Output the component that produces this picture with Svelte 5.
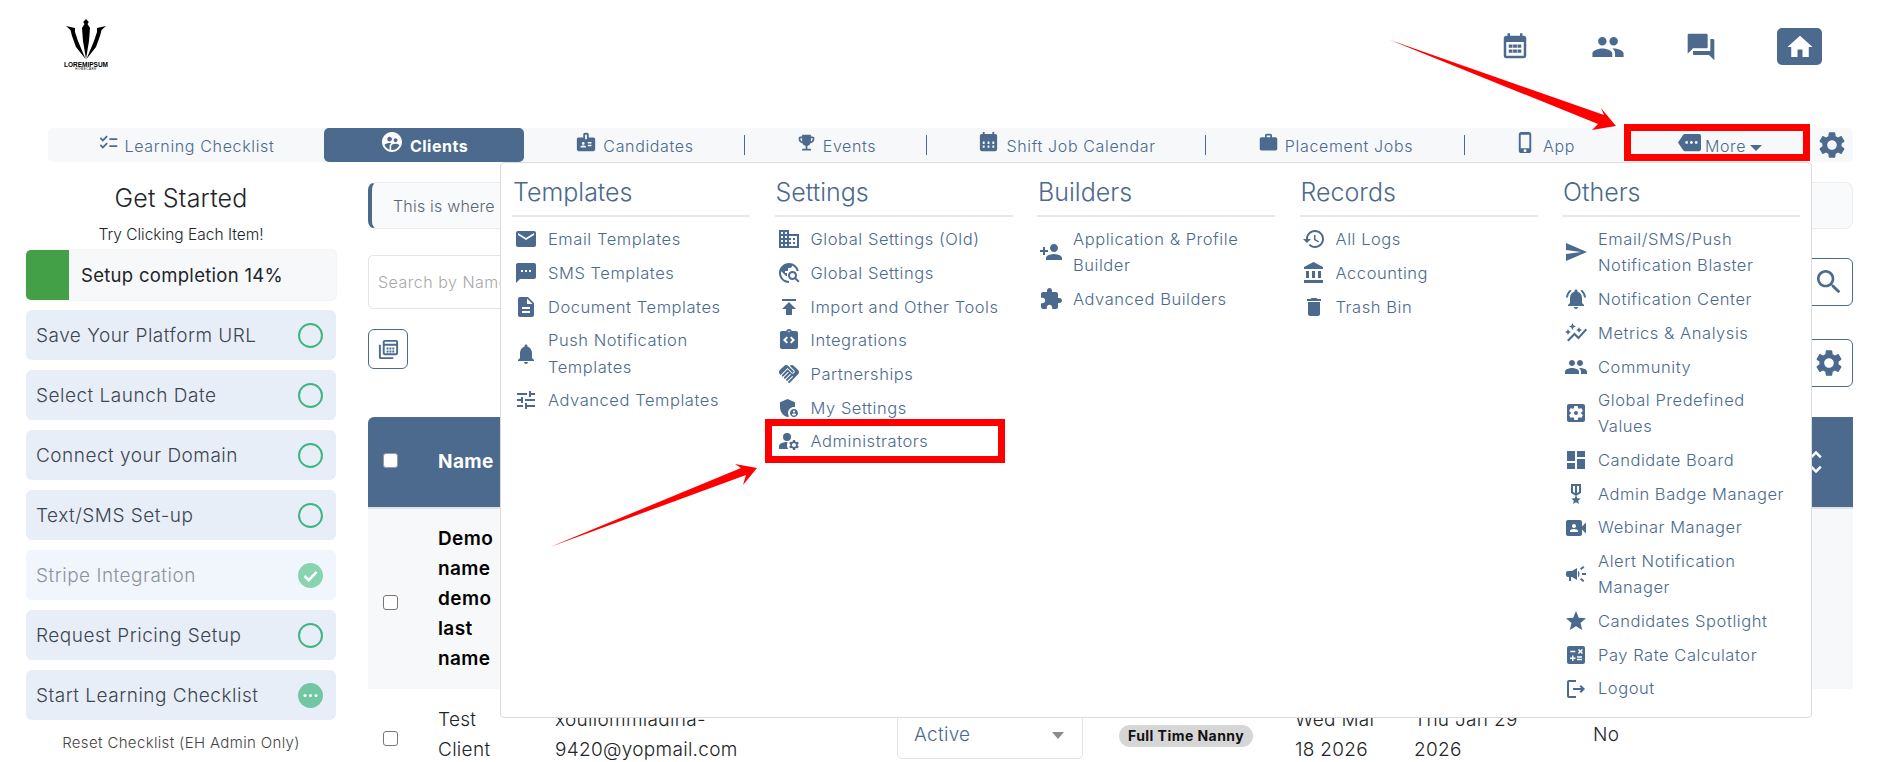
<script>
  const P = {
    calendar: 'M19 3h-1V1h-2v2H8V1H6v2H5c-1.11 0-2 .9-2 2v14c0 1.1.89 2 2 2h14c1.1 0 2-.9 2-2V5c0-1.1-.9-2-2-2zm0 16H5V8h14v11zM7 10h3v2.5H7zm3.5 0h3v2.5h-3zm3.5 0h3v2.5h-3zM7 14h3v2.5H7zm3.5 0h3v2.5h-3zm3.5 0h3v2.5h-3z',
    calfill: 'M19 3h-1V1h-2v2H8V1H6v2H5C3.9 3 3 3.9 3 5v14c0 1.1.9 2 2 2h14c1.1 0 2-.9 2-2V5c0-1.1-.9-2-2-2zM8 17.5H6V15h2v2.5zm0-4H6V11h2v2.500zm5 4h-2V15h2v2.500zm0-4h-2V11h2v2.500zm5 4h-2V15h2v2.500zm0-4h-2V11h2v2.500z',
    people: 'M16 11c1.66 0 2.99-1.34 2.99-3S17.66 5 16 5c-1.66 0-3 1.34-3 3s1.34 3 3 3zm-8 0c1.66 0 2.99-1.34 2.99-3S9.66 5 8 5C6.34 5 5 6.34 5 8s1.34 3 3 3zm0 2c-2.33 0-7 1.17-7 3.5V19h14v-2.5c0-2.33-4.67-3.5-7-3.5zm8 0c-.29 0-.62.02-.97.05 1.16.84 1.97 1.97 1.97 3.45V19h6v-2.5c0-2.33-4.67-3.5-7-3.5z',
    forum: 'M21 6h-2v9H6v2c0 .55.45 1 1 1h11l4 4V7c0-.55-.45-1-1-1zm-4 6V3c0-.55-.45-1-1-1H3c-.55 0-1 .45-1 1v14l4-4h10c.55 0 1-.45 1-1z',
    home: 'M10 20v-6h4v6h5v-8h3L12 3 2 12h3v8z',
    gear: 'M19.14 12.94c.04-.3.06-.61.06-.94 0-.32-.02-.64-.07-.94l2.03-1.58c.18-.14.23-.41.12-.61l-1.92-3.32c-.12-.22-.37-.29-.59-.22l-2.39.96c-.5-.38-1.03-.7-1.62-.94l-.36-2.54c-.04-.24-.24-.41-.48-.41h-3.84c-.24 0-.43.17-.47.41l-.36 2.54c-.59.24-1.13.57-1.62.94l-2.39-.96c-.22-.08-.47 0-.59.22L2.74 8.87c-.12.21-.08.47.12.61l2.03 1.58c-.05.3-.09.63-.09.94s.02.64.07.94l-2.03 1.58c-.18.14-.23.41-.12.61l1.92 3.32c.12.22.37.29.59.22l2.39-.96c.5.38 1.03.7 1.62.94l.36 2.54c.05.24.24.41.48.41h3.84c.24 0 .44-.17.47-.41l.36-2.54c.59-.24 1.13-.56 1.62-.94l2.39.96c.22.08.47 0 .59-.22l1.92-3.32c.12-.22.07-.47-.12-.61l-2.01-1.58zM12 15.6c-1.98 0-3.6-1.62-3.6-3.6s1.62-3.6 3.6-3.6 3.6 1.62 3.6 3.6-1.62 3.6-3.6 3.6z',
    checklist: 'M22 7h-9v2h9V7zm0 8h-9v2h9v-2zM5.54 11 2 7.46l1.41-1.41 2.12 2.12 4.24-4.24 1.41 1.41L5.54 11zm0 8L2 15.46l1.41-1.41 2.12 2.12 4.24-4.24 1.41 1.41L5.54 19z',
    clients: 'M11.99 2c-5.52 0-10 4.48-10 10s4.48 10 10 10 10-4.48 10-10-4.48-10-10-10zm3.61 6.34c1.07 0 1.93.86 1.93 1.93 0 1.07-.86 1.93-1.93 1.93-1.07 0-1.93-.86-1.93-1.93-.01-1.07.86-1.93 1.93-1.93zm-6-1.58c1.3 0 2.36 1.06 2.36 2.36 0 1.3-1.06 2.36-2.36 2.36s-2.36-1.06-2.36-2.36c0-1.31 1.05-2.36 2.36-2.36zm0 9.13v3.75c-2.4-.75-4.3-2.6-5.14-4.96 1.05-1.12 3.67-1.69 5.14-1.69.53 0 1.2.08 1.9.22-1.64.87-1.9 2.02-1.9 2.68zM11.99 20c-.27 0-.53-.01-.79-.04v-4.07c0-1.42 2.94-2.13 4.4-2.13 1.07 0 2.92.39 3.84 1.15-1.17 2.97-4.06 5.09-7.45 5.09z',
    badge: 'M20 7h-5V4c0-1.1-.9-2-2-2h-2c-1.1 0-2 .9-2 2v3H4c-1.1 0-2 .9-2 2v11c0 1.1.9 2 2 2h16c1.1 0 2-.9 2-2V9c0-1.1-.9-2-2-2zM9 12c.83 0 1.5.67 1.5 1.5S9.830 15 9 15s-1.5-.67-1.5-1.5S8.170 12 9 12zm3 6H6v-.75c0-1 2-1.5 3-1.5s3 .5 3 1.5V18zm1-9h-2V4h2v5zm5 7.500h-4V15h4v1.500zm0-3h-4V12h4v1.500z',
    trophy: 'M19 5h-2V3H7v2H5c-1.1 0-2 .9-2 2v1c0 2.550 1.920 4.630 4.390 4.940.630 1.500 1.980 2.630 3.610 2.960V19H7v2h10v-2h-4v-3.100c1.630-.330 2.980-1.460 3.610-2.960C19.080 12.630 21 10.550 21 8V7c0-1.100-.9-2-2-2zM5 8V7h2v3.820C5.840 10.400 5 9.300 5 8zm14 0c0 1.300-.840 2.400-2 2.820V7h2v1z',
    work: 'M20 6h-4V4c0-1.110-.890-2-2-2h-4c-1.110 0-2 .890-2 2v2H4c-1.110 0-1.990.890-1.990 2L2 19c0 1.110.890 2 2 2h16c1.110 0 2-.890 2-2V8c0-1.110-.890-2-2-2zm-6 0h-4V4h4v2z',
    phone: 'M15.500 1h-8C6.120 1 5 2.120 5 3.500v17C5 21.880 6.120 23 7.500 23h8c1.380 0 2.500-1.120 2.500-2.500v-17C18 2.120 16.880 1 15.500 1zm-4 21c-.830 0-1.500-.670-1.500-1.500s.670-1.500 1.500-1.500 1.500.670 1.500 1.500-.670 1.500-1.500 1.500zm4.500-4H7V4h9v14z',
    more: 'M22 3H7c-.690 0-1.230.350-1.590.880L0 12l5.410 8.110c.360.530.900.890 1.590.890h15c1.100 0 2-.900 2-2V5c0-1.100-.900-2-2-2zM9 13.500c-.830 0-1.500-.670-1.500-1.500s.670-1.500 1.500-1.500 1.500.670 1.500 1.500-.670 1.500-1.500 1.500zm5 0c-.830 0-1.500-.670-1.500-1.500s.670-1.500 1.500-1.500 1.500.670 1.500 1.500-.670 1.500-1.500 1.500zm5 0c-.830 0-1.500-.670-1.500-1.500s.670-1.500 1.500-1.500 1.500.670 1.500 1.500-.670 1.500-1.500 1.500z',
    email: 'M20 4H4c-1.100 0-1.990.900-1.990 2L2 18c0 1.100.900 2 2 2h16c1.100 0 2-.900 2-2V6c0-1.100-.900-2-2-2zm0 4l-8 5-8-5V6l8 5 8-5v2z',
    sms: 'M20 2H4c-1.100 0-1.990.900-1.990 2L2 22l4-4h14c1.100 0 2-.900 2-2V4c0-1.100-.900-2-2-2zM9 11H7V9h2v2zm4 0h-2V9h2v2zm4 0h-2V9h2v2z',
    doc: 'M14 2H6c-1.100 0-1.990.900-1.990 2L4 20c0 1.100.890 2 1.990 2H18c1.100 0 2-.900 2-2V8l-6-6zm2 16H8v-2h8v2zm0-4H8v-2h8v2zm-3-5V3.500L18.500 9H13z',
    bell: 'M12 22c1.100 0 2-.900 2-2h-4c0 1.100.890 2 2 2zm6-6v-5c0-3.070-1.640-5.640-4.500-6.320V4c0-.830-.670-1.500-1.500-1.500s-1.500.670-1.500 1.500v.680C7.630 5.360 6 7.920 6 11v5l-2 2v1h16v-1l-2-2z',
    tune: 'M3 17v2h6v-2H3zM3 5v2h10V5H3zm10 16v-2h8v-2h-8v-2h-2v6h2zM7 9v2H3v2h4v2h2V9H7zm14 4v-2H11v2h10zm-6-4h2V7h4V5h-4V3h-2v6z',
    domain: 'M12 7V3H2v18h20V7H12zM6 19H4v-2h2v2zm0-4H4v-2h2v2zm0-4H4V9h2v2zm0-4H4V5h2v2zm4 12H8v-2h2v2zm0-4H8v-2h2v2zm0-4H8V9h2v2zm0-4H8V5h2v2zm10 12h-8v-2h2v-2h-2v-2h2v-2h-2V9h8v10zm-2-8h-2v2h2v-2zm0 4h-2v2h2v-2z',
    explore: 'M19.300 16.900c.400-.700.700-1.500.700-2.400 0-2.500-2-4.500-4.500-4.500S11 12 11 14.500s2 4.500 4.500 4.500c.900 0 1.700-.300 2.400-.700l3.200 3.200 1.400-1.400-3.200-3.200zm-3.800.100c-1.400 0-2.500-1.100-2.500-2.500s1.100-2.500 2.500-2.500 2.500 1.100 2.500 2.500-1.100 2.500-2.500 2.500zM12 20v2C6.480 22 2 17.520 2 12S6.480 2 12 2c4.840 0 8.870 3.440 9.800 8h-2.070c-.640-2.460-2.400-4.470-4.730-5.410V5c0 1.100-.900 2-2 2h-2v2c0 .550-.450 1-1 1H8v2h2v3H9l-4.790-4.790C4.080 10.790 4 11.380 4 12c0 4.410 3.590 8 8 8z',
    publish: 'M5 4v2h14V4H5zm0 10h4v6h6v-6h4l-7-7-7 7z',
    integ: 'M19 3h-4.180C14.400 1.840 13.300 1 12 1s-2.400.840-2.820 2H5c-.140 0-.270.010-.400.040-.390.080-.740.280-1.010.550-.180.180-.330.400-.430.640-.100.230-.160.490-.160.770v14c0 .270.060.540.160.780s.250.450.430.640c.270.270.620.470 1.010.550.130.020.260.030.400.030h14c1.100 0 2-.900 2-2V5c0-1.100-.900-2-2-2zM11 14.170l-1.410 1.420L6 12l3.590-3.590L11 9.830 8.830 12 11 14.170zm1-9.920c-.410 0-.750-.340-.750-.750s.340-.750.750-.750.750.340.750.750-.340.750-.750.750zm2.410 11.340L13 14.170 15.170 12 13 9.830l1.410-1.420L18 12l-3.590 3.590z',
    hand: 'M16.480 10.410c-.390.390-1.040.390-1.430 0l-4.470-4.460-7.050 7.040-.660-.630c-1.170-1.170-1.170-3.070 0-4.240l4.240-4.240c1.170-1.170 3.070-1.170 4.240 0L16.480 9c.390.390.390 1.020 0 1.410zm.700-2.120c.780.780.780 2.050 0 2.830-1.270 1.270-2.610.220-2.830 0l-3.760-3.760-5.570 5.570c-.390.390-.390 1.020 0 1.410.390.390 1.020.390 1.420 0l4.620-4.620.710.710-4.620 4.620c-.390.390-.390 1.020 0 1.410.390.390 1.020.390 1.420 0l4.620-4.620.710.710-4.620 4.620c-.390.390-.390 1.020 0 1.410.390.390 1.020.390 1.410 0l4.620-4.620.710.710-4.620 4.620c-.390.390-.390 1.020 0 1.410.390.390 1.020.390 1.410 0l8.320-8.340c1.170-1.170 1.170-3.070 0-4.240l-4.240-4.240c-1.150-1.150-3.010-1.170-4.180-.060l4.480 4.470z',
    shield: 'M17 11c.340 0 .670.040 1 .090V6.270L10.500 3 3 6.270v4.910c0 4.540 3.200 8.790 7.500 9.820.550-.130 1.080-.320 1.600-.550-.690-.980-1.100-2.170-1.100-3.450 0-3.310 2.690-6 6-6zM17 13c-2.210 0-4 1.790-4 4s1.790 4 4 4 4-1.790 4-4-1.790-4-4-4zm0 1.380c.620 0 1.120.510 1.120 1.120s-.510 1.120-1.120 1.120-1.120-.510-1.120-1.120.500-1.120 1.120-1.120zm0 5.370c-.930 0-1.740-.460-2.240-1.170.050-.720 1.510-1.080 2.240-1.080s2.190.360 2.240 1.080c-.500.710-1.310 1.170-2.240 1.170z',
    admins: 'M10.670 13.020c-.220-.010-.440-.020-.670-.020-2.420 0-4.680.670-6.610 1.820-.880.520-1.390 1.500-1.390 2.530V20h9.260c-.790-1.130-1.260-2.510-1.260-4 0-1.070.250-2.070.670-2.980zM14 8a4 4 0 1 1-8 0 4 4 0 0 1 8 0zM20.750 16c0-.220-.030-.420-.060-.630l1.140-1.010-1-1.730-1.450.490c-.320-.270-.680-.480-1.080-.630L18 11h-2l-.300 1.490c-.400.150-.760.360-1.080.630l-1.450-.490-1 1.730 1.140 1.010c-.030.210-.060.410-.060.630s.030.420.06.630l-1.140 1.010 1 1.730 1.450-.490c.320.270.680.480 1.080.630L16 21h2l.300-1.490c.400-.150.760-.360 1.080-.630l1.450.490 1-1.730-1.140-1.010c.030-.210.060-.410.060-.630zM17 18c-1.100 0-2-.900-2-2s.900-2 2-2 2 .900 2 2-.900 2-2 2z',
    personadd: 'M15 12c2.210 0 4-1.790 4-4s-1.790-4-4-4-4 1.790-4 4 1.790 4 4 4zm-9-2V7H4v3H1v2h3v3h2v-3h3v-2H6zm9 4c-2.670 0-8 1.340-8 4v2h16v-2c0-2.660-5.330-4-8-4z',
    puzzle: 'M20.500 11H19V7c0-1.100-.900-2-2-2h-4V3.500C13 2.120 11.880 1 10.500 1S8 2.120 8 3.500V5H4c-1.100 0-1.990.900-1.990 2v3.800H3.500c1.490 0 2.700 1.210 2.700 2.700s-1.210 2.700-2.700 2.700H2V20c0 1.100.900 2 2 2h3.800v-1.500c0-1.490 1.210-2.700 2.700-2.700 1.490 0 2.700 1.210 2.700 2.700V22H17c1.100 0 2-.900 2-2v-4h1.500c1.380 0 2.500-1.120 2.500-2.500S21.880 11 20.500 11z',
    history: 'M13 3c-4.970 0-9 4.030-9 9H1l3.890 3.890.070.140L9 12H6c0-3.870 3.130-7 7-7s7 3.130 7 7-3.130 7-7 7c-1.930 0-3.680-.790-4.940-2.060l-1.420 1.420C8.270 19.990 10.510 21 13 21c4.970 0 9-4.030 9-9s-4.030-9-9-9zm-1 5v5l4.280 2.540.720-1.210-3.500-2.080V8H12z',
    bank: 'M4 10v7h3v-7H4zm6 0v7h3v-7h-3zM2 22h19v-3H2v3zm14-12v7h3v-7h-3zm-4.500-9L2 6v2h19V6l-9.500-5z',
    trash: 'M6 19c0 1.100.900 2 2 2h8c1.100 0 2-.900 2-2V7H6v12zM19 4h-3.500l-1-1h-5l-1 1H5v2h14V4z',
    send: 'M2.010 21 23 12 2.010 3 2 10l15 2-15 2z',
    bellon: 'M7.580 4.080 6.150 2.650C3.750 4.480 2.170 7.300 2.030 10.500h2c.150-2.650 1.510-4.970 3.550-6.420zm12.390 6.420h2c-.150-3.200-1.730-6.020-4.120-7.850l-1.420 1.430c2.020 1.450 3.390 3.770 3.540 6.420zM18 11c0-3.070-1.640-5.640-4.500-6.320V4c0-.830-.670-1.500-1.500-1.500s-1.500.670-1.500 1.500v.680C7.630 5.360 6 7.920 6 11v5l-2 2v1h16v-1l-2-2v-5zm-6 11c.140 0 .270-.010.400-.040.650-.140 1.180-.580 1.440-1.180.100-.240.150-.500.150-.780h-4c.010 1.100.900 2 2.010 2z',
    graph: 'M14.060 9.940 12 9l2.060-.940L15 6l.940 2.060L18 9l-2.060.940L15 12l-.940-2.060zM4 14l.940-2.060L7 11l-2.060-.940L4 8l-.940 2.060L1 11l2.060.940L4 14zm4.500-5 1.090-2.410L12 5.500 9.590 4.410 8.500 2 7.410 4.410 5 5.500l2.410 1.090L8.500 9zm-4 11.500 6-6.010 4 4L23 8.930l-1.410-1.410-7.090 7.970-4-4L3 19l1.500 1.500z',
    apps: 'M12 10c-1.100 0-2 .900-2 2s.900 2 2 2 2-.900 2-2-.900-2-2-2zm7-7H5c-1.110 0-2 .900-2 2v14c0 1.100.890 2 2 2h14c1.110 0 2-.900 2-2V5c0-1.100-.890-2-2-2zm-1.750 9c0 .230-.020.460-.050.680l1.480 1.160c.130.110.170.300.080.450l-1.400 2.420c-.090.150-.270.210-.430.150l-1.740-.700c-.360.280-.760.510-1.180.690l-.260 1.850c-.030.170-.180.300-.350.300h-2.800c-.170 0-.320-.130-.350-.290l-.260-1.850c-.430-.180-.820-.410-1.180-.69l-1.740.700c-.160.060-.340 0-.430-.150l-1.400-2.420c-.090-.150-.050-.340.080-.450l1.480-1.160c-.030-.230-.050-.460-.050-.69 0-.230.020-.460.050-.68l-1.480-1.160c-.130-.110-.170-.300-.080-.450l1.400-2.420c.090-.150.270-.210.430-.150l1.740.700c.360-.280.760-.510 1.180-.69l.260-1.850c.030-.170.180-.300.350-.300h2.800c.170 0 .320.130.350.290l.260 1.850c.430.180.820.410 1.180.69l1.740-.700c.160-.060.340 0 .430.150l1.400 2.420c.090.150.050.340-.080.450l-1.480 1.160c.030.230.050.460.050.69z',
    dash: 'M3 13h8V3H3v10zm0 8h8v-6H3v6zm10 0h8V11h-8v10zm0-18v6h8V3h-8z',
    medal: 'M17 10.430V2H7v8.430c0 .350.180.680.490.860l4.180 2.510-.990 2.340-3.410.290 2.590 2.240L9.070 22 12 20.230 14.930 22l-.780-3.330 2.590-2.240-3.410-.290-.990-2.340 4.180-2.510c.300-.180.480-.500.480-.860zm-6 .640-2-1.200V4h2v7.070zm4-1.200-2 1.200V4h2v5.870z',
    video: 'M18 10.480V6c0-1.100-.900-2-2-2H4c-1.100 0-2 .900-2 2v12c0 1.100.900 2 2 2h12c1.100 0 2-.900 2-2v-4.480l4 3.980v-11l-4 3.980zM10 8c1.100 0 2 .900 2 2s-.900 2-2 2-2-.900-2-2 .900-2 2-2zm4 8H6v-.570c0-.810.480-1.530 1.220-1.850.850-.370 1.790-.580 2.780-.580.990 0 1.930.210 2.780.580.740.320 1.220 1.040 1.220 1.850V16z',
    megaphone: 'M18 11v2h4v-2h-4zm-2 6.610c.960.710 2.210 1.650 3.200 2.390.400-.530.800-1.070 1.200-1.600-.990-.740-2.240-1.680-3.200-2.400-.400.540-.800 1.080-1.200 1.610zM20.400 5.600c-.400-.530-.800-1.070-1.200-1.600-.990.740-2.240 1.680-3.200 2.400.400.530.800 1.070 1.200 1.600.960-.720 2.210-1.650 3.200-2.400zM4 9c-1.100 0-2 .900-2 2v2c0 1.100.900 2 2 2h1v4h2v-4h1l5 3V6L8 9H4zm11.500 3c0-1.330-.580-2.530-1.500-3.350v6.690c.920-.810 1.500-2.010 1.500-3.340z',
    star: 'M12 17.270 18.180 21l-1.640-7.030L22 9.240l-7.190-.610L12 2 9.190 8.630 2 9.240l5.460 4.730L5.820 21z',
    calc: 'M19 3H5c-1.100 0-2 .900-2 2v14c0 1.100.900 2 2 2h14c1.100 0 2-.900 2-2V5c0-1.100-.900-2-2-2zm-5.030 4.060 1.060-1.060 1.410 1.410L17.850 6l1.060 1.060-1.410 1.410 1.410 1.420-1.060 1.060-1.410-1.410-1.410 1.410-1.060-1.060 1.410-1.420-1.410-1.410zM6.250 7.720h5v1.500h-5v-1.500zM11.500 16h-2v2H8v-2H6v-1.500h2v-2h1.500v2h2V16zm6.500 1.250h-5v-1.500h5v1.500zm0-2.500h-5v-1.500h5v1.500z',
    logout: 'M17 8l-1.410 1.410L17.170 11H9v2h8.170l-1.580 1.580L17 16l4-4-4-4zM5 5h7V3H5c-1.100 0-2 .900-2 2v14c0 1.100.900 2 2 2h7v-2H5V5z',
    search: 'M15.500 14h-.790l-.280-.270C15.410 12.590 16 11.110 16 9.500 16 5.910 13.090 3 9.500 3S3 5.910 3 9.500 5.910 16 9.500 16c1.610 0 3.090-.590 4.230-1.570l.270.280v.790l5 4.990L20.490 19l-4.990-5zm-6 0C7.010 14 5 11.990 5 9.500S7.010 5 9.500 5 14 7.010 14 9.500 11.990 14 9.500 14z',
    unfold: 'M12 5.830 15.170 9l1.410-1.410L12 3 7.410 7.590 8.830 9 12 5.830zm0 12.340L8.830 15l-1.410 1.410L12 21l4.590-4.590L15.170 15 12 18.170z',
    copycalc: 'M4 7H2v13c0 1.100.900 2 2 2h13v-2H4V7zM20 2H8C6.900 2 6 2.900 6 4v12c0 1.100.900 2 2 2h12c1.100 0 2-.900 2-2V4c0-1.100-.900-2-2-2zm0 14H8V8h12v8zm0-10H8V4h12v2zM10 10h2v2h-2zm3 0h2v2h-2zm3 0h2v2h-2zm-6 3h2v2h-2zm3 0h2v2h-2zm3 0h2v2h-2z',
  };

  const tabs = [
    { label: 'Learning Checklist', icon: 'checklist' },
    { label: 'Clients', icon: 'clients', active: true },
    { label: 'Candidates', icon: 'badge' },
    { label: 'Events', icon: 'trophy', sep: true },
    { label: 'Shift Job Calendar', icon: 'calfill', sep: true },
    { label: 'Placement Jobs', icon: 'work', sep: true },
    { label: 'App', icon: 'phone', sep: true },
  ];

  const menu = [
    { title: 'Templates', items: [
      ['email', 'Email Templates'], ['sms', 'SMS Templates'], ['doc', 'Document Templates'],
      ['bell', 'Push Notification Templates'], ['tune', 'Advanced Templates'] ] },
    { title: 'Settings', items: [
      ['domain', 'Global Settings (Old)'], ['explore', 'Global Settings'], ['publish', 'Import and Other Tools'],
      ['integ', 'Integrations'], ['hand', 'Partnerships'], ['shield', 'My Settings'], ['admins', 'Administrators'] ] },
    { title: 'Builders', items: [
      ['personadd', 'Application & Profile Builder'], ['puzzle', 'Advanced Builders'] ] },
    { title: 'Records', items: [
      ['history', 'All Logs'], ['bank', 'Accounting'], ['trash', 'Trash Bin'] ] },
    { title: 'Others', items: [
      ['send', 'Email/SMS/Push Notification Blaster'], ['bellon', 'Notification Center'], ['graph', 'Metrics & Analysis'],
      ['people', 'Community'], ['apps', 'Global Predefined Values'], ['dash', 'Candidate Board'],
      ['medal', 'Admin Badge Manager'], ['video', 'Webinar Manager'], ['megaphone', 'Alert Notification Manager'],
      ['star', 'Candidates Spotlight'], ['calc', 'Pay Rate Calculator'], ['logout', 'Logout'] ] },
  ];

  const steps = [
    { label: 'Save Your Platform URL', state: 'open' },
    { label: 'Select Launch Date', state: 'open' },
    { label: 'Connect your Domain', state: 'open' },
    { label: 'Text/SMS Set-up', state: 'open' },
    { label: 'Stripe Integration', state: 'done' },
    { label: 'Request Pricing Setup', state: 'open' },
    { label: 'Start Learning Checklist', state: 'busy' },
  ];

  const tabIconSize = { phone: 23, clients: 24, calfill: 23, badge: 22 };
</script>

{#snippet icon(name, size, cls = '')}
  <svg class="ic {cls}" width={size} height={size} viewBox="0 0 24 24" aria-hidden="true"><path d={P[name]} /></svg>
{/snippet}

<div class="page">
  <header class="top">
    <div class="logo">
      <svg width="44" height="41" viewBox="0 0 44 41" aria-hidden="true">
        <path d="M22 0l2.800 3-1.300 2 2.500 4-1 13-3 18-3-18-1-13 2.500-4-1.300-2z" />
        <path d="M2 7l9 2 0 4 3 9 7.500 18-9.500-12-4-11-1.500-6z" />
        <path d="M42 7l-9 2 0 4-3 9-7.500 18 9.500-12 4-11 1.500-6z" />
      </svg>
      <span class="logo-name">LOREMIPSUM</span>
      <span class="logo-sub">HOMECARE</span>
    </div>
    <div class="top-icons">
      <span class="ti">{@render icon('calendar', 30)}</span>
      <span class="ti">{@render icon('people', 34)}</span>
      <span class="ti">{@render icon('forum', 32)}</span>
      <span class="ti home">{@render icon('home', 30)}</span>
    </div>
  </header>

  <nav class="nav">
    {#each tabs as t}
      <a class="tab" class:active={t.active} class:sep={t.sep}>
        {@render icon(t.icon, tabIconSize[t.icon] ?? 21)}<span>{t.label}</span>
      </a>
    {/each}
    <a class="tab more">
      {@render icon('more', 23)}<span>More</span><i class="caret"></i>
    </a>
    <a class="tab gear">{@render icon('gear', 32)}</a>
  </nav>

  <div class="body">
    <aside class="side">
      <h2>Get Started</h2>
      <p class="try">Try Clicking Each Item!</p>
      <div class="progress"><span class="fill"></span><span class="ptext">Setup completion 14%</span></div>
      <ul class="steps">
        {#each steps as s}
          <li class="step" class:done={s.state === 'done'}>
            <span>{s.label}</span>
            {#if s.state === 'open'}
              <i class="ring"></i>
            {:else if s.state === 'done'}
              <svg class="dot" width="25" height="25" viewBox="0 0 25 25" aria-hidden="true"><circle cx="12.500" cy="12.500" r="12.500" fill="#88d3b0" /><path d="M6.500 13l4.200 4.200 8-8.400" fill="none" stroke="#fff" stroke-width="2.600" /></svg>
            {:else}
              <svg class="dot" width="25" height="25" viewBox="0 0 25 25" aria-hidden="true"><circle cx="12.500" cy="12.500" r="12.500" fill="#70c7a2" /><circle cx="7" cy="12.500" r="1.500" fill="#fff" /><circle cx="12.500" cy="12.500" r="1.500" fill="#fff" /><circle cx="18" cy="12.500" r="1.500" fill="#fff" /></svg>
            {/if}
          </li>
        {/each}
      </ul>
      <p class="reset">Reset Checklist (EH Admin Only)</p>
    </aside>

    <main class="main">
      <div class="info">This is where</div>
      <div class="searchrow">
        <div class="searchbox">Search by Name</div>
        <button class="sq sbtn">{@render icon('search', 32)}</button>
      </div>
      <div class="tools">
        <button class="sq calcbtn">{@render icon('copycalc', 23)}</button>
        <button class="sq setbtn">{@render icon('gear', 32)}</button>
      </div>
      <table>
        <colgroup><col class="c1" /><col class="c2" /><col class="c3" /><col class="c4" /><col class="c5" /><col class="c6" /><col class="c7" /><col /></colgroup>
        <thead>
          <tr>
            <th class="cb"><input class="head-check" type="checkbox" /></th>
            <th>Name</th><th></th><th></th><th></th><th></th><th></th>
            <th class="sort">{@render icon('unfold', 30)}</th>
          </tr>
        </thead>
        <tbody>
          <tr class="r1">
            <td class="cb"><input type="checkbox" /></td>
            <td class="strong"><div class="narrow">Demo name demo last name</div></td><td></td><td></td><td></td><td></td><td></td><td></td>
          </tr>
          <tr class="r2">
            <td class="cb"><input type="checkbox" /></td>
            <td><div class="narrow">Test Client</div></td>
            <td class="mail"><div class="narrow">xouliommiadina-9420@yopmail.com</div></td>
            <td><div class="select"><span>Active</span><i class="scaret"></i></div></td>
            <td><span class="pill">Full Time Nanny</span></td>
            <td>Wed Mar<br />18 2026</td>
            <td>Thu Jan 29<br />2026</td>
            <td>No</td>
          </tr>
        </tbody>
      </table>
    </main>
  </div>

  <div class="drop">
    {#each menu as col}
      <section class="col">
        <h3>{col.title}</h3>
        <ul>
          {#each col.items as [ic, label]}
            <li>{@render icon(ic, 24)}<span>{label}</span></li>
          {/each}
        </ul>
      </section>
    {/each}
  </div>

  <div class="mark mark-more"></div>
  <div class="mark mark-admin"></div>
  <svg class="arrows" width="1887" height="762" viewBox="0 0 1887 762" aria-hidden="true">
    <polygon points="1390,40 1604,115 1601,108 1616,126 1592,130 1598,124" />
    <polygon points="550,547 741,468 735,464 757,468 743,485 746,475" />
  </svg>
</div>

<style>
  :global(body) { margin: 0; background: #fff; }
  .page {
    position: relative;
    width: 1887px;
    height: 762px;
    overflow: hidden;
    background: #fff;
    font-family: Inter, "Noto Sans", sans-serif;
    font-weight: 300;
    color: #212529;
  }
  .ic { fill: currentColor; display: block; flex: none; }
  ul { list-style: none; margin: 0; padding: 0; }
  h2, h3, p { margin: 0; font-weight: 300; }

  .top { height: 128px; display: flex; justify-content: space-between; padding: 19px 65px 0 64px; box-sizing: border-box; }
  .logo { width: 44px; display: flex; flex-direction: column; align-items: center; color: #000; }
  .logo svg { fill: #000; display: block; }
  .logo-name { font-size: 6.500px; font-weight: 700; line-height: 7px; margin-top: 1px; font-family: "Liberation Sans", sans-serif; white-space: nowrap; }
  .logo-sub { font-size: 3px; line-height: 3px; letter-spacing: .5px; font-family: "Liberation Sans", sans-serif; }
  .top-icons { display: flex; gap: 48px; align-items: flex-start; color: #4b6a8d; margin-top: 9px; }
  .ti { width: 45px; height: 37px; display: flex; align-items: center; justify-content: center; }
  .home { background: #4b6a8d; color: #fff; border-radius: 5px; margin-left: 6px; }

  .nav {
    margin-left: 48px;
    width: 1805px;
    height: 34px;
    display: grid;
    grid-template-columns: 276px 200px 221px 182px 279px 259px 159px 186px 43px;
    background: #f7f8fa;
    border-radius: 5px;
    color: #4b6a8d;
    font-size: 16px;
    letter-spacing: .65px;
  }
  .tab { display: flex; align-items: center; justify-content: center; gap: 6px; position: relative; padding-top: 2px; box-sizing: border-box; white-space: nowrap; }
  .tab .ic { margin-top: -8px; }
  .tab.active { background: #4b6a8d; color: #fff; border-radius: 5px; font-weight: 700; letter-spacing: .5px; }
  .tab.sep::before { content: ''; position: absolute; left: -1px; top: 7px; height: 20px; width: 1px; background: #4b6a8d; }
  .more { gap: 4px; padding-left: 6px; }
  .caret { width: 0; height: 0; border: 6px solid transparent; border-top: 6px solid #4b6a8d; border-bottom: 0; margin-top: 3px; }
  .gear { padding: 0; }
  .gear .ic { margin: 0; }

  .body { display: flex; gap: 32px; padding: 0 34px 0 26px; }
  .side { width: 310px; flex: none; text-align: center; }
  .side h2 { font-size: 25px; line-height: 28px; margin-top: 22px; font-weight: 300; letter-spacing: .2px; }
  .try { font-size: 15.500px; line-height: 20px; margin-top: 13px; }
  .progress { height: 50px; margin-top: 5px; display: flex; align-items: center; background: #f7f8fa; border-radius: 5px; box-shadow: 0 0 2px rgba(0,0,0,.15); overflow: hidden; }
  .fill { width: 43px; height: 100%; background: #43a047; }
  .ptext { font-size: 18.500px; margin-left: 12px; font-weight: 400; letter-spacing: .3px; }
  .steps { margin-top: 10px; display: flex; flex-direction: column; gap: 10px; }
  .step { height: 50px; display: flex; align-items: center; justify-content: space-between; padding: 0 13px 0 10px; background: #e8eef8; border-radius: 6px; font-size: 19px; letter-spacing: .5px; color: #3c4650; text-align: left; }
  .step.done { background: #f1f5fc; color: #8c949c; }
  .ring { width: 21px; height: 21px; border: 2px solid #3fb583; border-radius: 50%; display: block; }
  .dot { display: block; }
  .reset { font-size: 15px; line-height: 20px; margin-top: 13px; color: #444; letter-spacing: .35px; }

  .main { flex: 1; min-width: 0; padding-top: 20px; }
  .info { height: 47px; box-sizing: border-box; padding-left: 21px; display: flex; align-items: center; font-size: 16px; letter-spacing: .2px; color: #5b6672; background: #f9fafb; border: 1px solid #ececec; border-left: 4px solid #4b6a8d; border-radius: 8px; }
  .searchrow { display: flex; align-items: center; gap: 8px; margin-top: 26px; height: 54px; }
  .searchbox { flex: 1; align-self: stretch; border: 1px solid #e4e4e4; border-radius: 5px; box-sizing: border-box; padding-left: 9px; display: flex; align-items: center; color: #a8a8a8; font-size: 16px; letter-spacing: .5px; }
  .sq { background: #fff; border: 1px solid #4b6a8d; border-radius: 6px; color: #4b6a8d; display: flex; align-items: center; justify-content: center; padding: 0; box-sizing: border-box; }
  .sbtn { width: 80px; height: 48px; justify-content: flex-end; padding-right: 7px; }
  .tools { display: flex; justify-content: space-between; align-items: flex-start; margin-top: 20px; height: 58px; }
  .calcbtn { width: 40px; height: 40px; }
  .setbtn { width: 80px; height: 48px; margin-top: 10px; justify-content: flex-end; padding-right: 7px; }

  table { width: 1485px; margin-top: 30px; border-collapse: separate; border-spacing: 0; table-layout: fixed; font-size: 19px; line-height: 30px; letter-spacing: .3px; color: #212529; }
  .c1 { width: 70px; } .c2 { width: 117px; } .c3 { width: 342px; } .c4 { width: 222px; } .c5 { width: 176px; } .c6 { width: 119px; } .c7 { width: 179px; }
  th, td { padding: 0; text-align: left; vertical-align: middle; }
  th { height: 90px; background: #4b6a8d; color: #fff; border-bottom: 2px solid #dbe2ea; font-weight: 700; letter-spacing: .4px; }
  thead th:first-child { border-top-left-radius: 6px; }
  .sort .ic { margin-left: auto; margin-right: 22px; }
  .cb { padding-left: 15px; }
  input[type='checkbox'] { appearance: none; display: block; width: 15px; height: 15px; margin: 6px 0 0; background: #fff; border: 1px solid #767676; border-radius: 3px; box-sizing: border-box; }
  input.head-check { margin: 0 0 4px; border-color: #9a9a9a; }
  .r1 td { height: 180px; background: #f7f8fa; }
  .r2 td { height: 92px; }
  .strong { font-weight: 600; color: #000; letter-spacing: .4px; }
  .narrow { width: min-content; }
  .select { width: 186px; height: 48px; box-sizing: border-box; border: 1px solid #e4e4e4; border-radius: 5px; display: flex; align-items: center; justify-content: space-between; padding: 0 18px 0 16px; color: #4b6a8d; }
  .scaret { width: 0; height: 0; border: 6px solid transparent; border-top: 7px solid #8c8c8c; border-bottom: 0; }
  .pill { display: inline-block; height: 22px; padding: 0 9px; line-height: 22px; font-size: 14px; font-weight: 700; letter-spacing: .45px; background: #d6d6d6; color: #111; border-radius: 11px; white-space: nowrap; }

  .drop { position: absolute; left: 500px; top: 162px; width: 1312px; height: 556px; box-sizing: border-box; background: #fff; border: 1px solid #dcdcdc; border-radius: 4px; padding: 0 11px; display: grid; grid-template-columns: repeat(5, 238px); column-gap: 24.500px; color: #4b6a8d; }
  .col h3 { font-size: 25px; line-height: 30px; padding: 14px 0 8px 1px; border-bottom: 2px solid #e6e8ec; font-weight: 300; }
  .col ul { margin-top: 5.500px; }
  .col li { display: flex; align-items: center; gap: 10px; padding: 3.700px 0 3.700px 2px; font-size: 16.500px; line-height: 26.300px; letter-spacing: .55px; }
  .col li span { flex: 1; }

  .mark { position: absolute; box-sizing: border-box; border: 7px solid #ff0000; }
  .mark-more { left: 1624px; top: 124px; width: 186px; height: 37px; }
  .mark-admin { left: 765px; top: 419px; width: 240px; height: 44px; }
  .arrows { position: absolute; left: 0; top: 0; pointer-events: none; }
  .arrows polygon { fill: #ff0000; }
</style>
